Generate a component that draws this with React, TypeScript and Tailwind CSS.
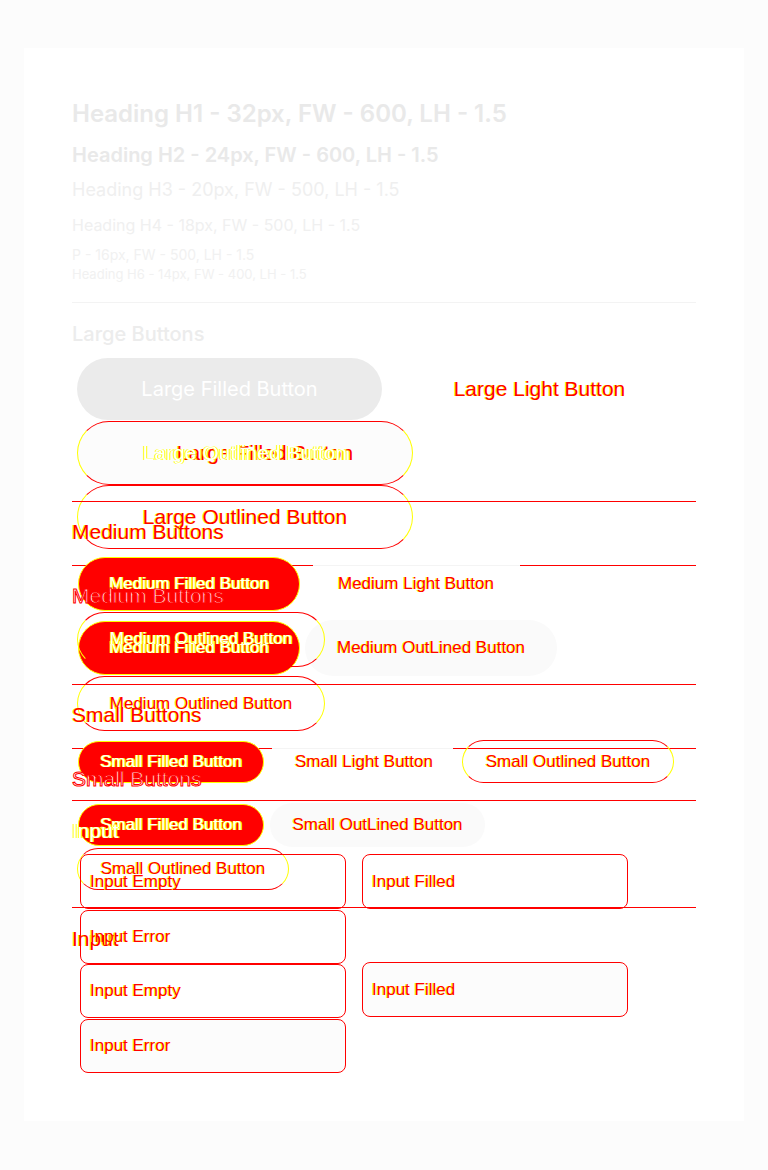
import React from 'react';

const inter = "font-['Inter','Noto_Sans',sans-serif]";
const sans = "font-['Liberation_Sans',Arial,sans-serif]";
const red = "text-[#ff0000] [text-shadow:-1px_0_0_#ffff00]";
const ghost = 'text-white [text-shadow:-1px_0_0_#ffff00,1px_0_0_#ffff00]';
const hollow = 'text-white [-webkit-text-stroke:1px_#ff0000]';

const pillOutline = 'rounded-full border border-[#ffff00] border-y-[#ff0000]';
const pillRed = 'rounded-full border border-[#ffff00] bg-[#ff0000]';
const field = 'flex items-center rounded-lg border border-[#ff0000] pl-[9px]';

const RedLine: React.FC = () => <div className="h-px bg-[#ff0000]" />;

const SplitLine: React.FC<{ a: string; b: string }> = ({ a, b }) => (
  <div className="flex h-px">
    <div className={`${a} bg-[#ff0000]`} />
    <div className={`${b} bg-[#f4f4f4]`} />
    <div className="flex-1 bg-[#ff0000]" />
  </div>
);

// layer that matches the faded parts of the page
const BaseLayer: React.FC = () => (
  <div className="[grid-area:1/1] flex flex-col">
    <h3 className={`mt-4 ${inter} text-[20px] leading-[30px] font-medium text-[#ececec]`}>
      Large Buttons
    </h3>
    <div className="mt-[9px] flex items-center gap-[5px] pl-[5px]">
      <div
        className={`flex h-[62px] w-[305px] items-center justify-center rounded-full bg-[#ebebeb] ${inter} text-[20px] text-white`}
      >
        Large Filled Button
      </div>
      <div className={`flex h-[62px] w-[305px] items-center justify-center ${sans} text-[21px] ${red}`}>
        Large Light Button
      </div>
    </div>
    <div className="mt-px h-[64px]" />
    <div className="pl-[5px]">
      <div className={`flex h-[64px] w-[336px] items-center justify-center ${pillOutline} ${sans} text-[21px] ${red}`}>
        Large Outlined Button
      </div>
    </div>

    <div className="mt-4">
      <SplitLine a="w-[241px]" b="w-[207px]" />
    </div>
    <h3 className={`relative z-10 mt-[15px] ${sans} text-[21px] leading-[30px] ${hollow}`}>Medium Buttons</h3>
    <div className="mt-[9px] flex h-[56px] items-center gap-[5px] pl-[6px]">
      <div className={`flex h-[54px] w-[222px] items-center justify-center ${pillRed} ${sans} text-[17px] ${ghost}`}>
        Medium Filled Button
      </div>
      <div className={`flex h-[56px] w-[252px] items-center justify-center rounded-full bg-[#fafafa] ${sans} text-[17px] ${red}`}>
        Medium OutLined Button
      </div>
    </div>
    <div className="pl-[5px]">
      <div className={`flex h-[55px] w-[248px] items-center justify-center ${pillOutline} ${sans} text-[17px] ${red}`}>
        Medium Outlined Button
      </div>
    </div>

    <div className="mt-[17px]">
      <SplitLine a="w-[200px]" b="w-[181px]" />
    </div>
    <h3 className={`relative z-10 mt-[15px] ${sans} text-[21px] leading-[30px] ${hollow}`}>Small Buttons</h3>
    <div className="mt-[9px] flex h-[44px] items-center gap-[6px] pl-[6px]">
      <div className={`flex h-[42px] w-[186px] items-center justify-center ${pillRed} ${sans} text-[17px] ${ghost}`}>
        Small Filled Button
      </div>
      <div className={`flex h-[44px] w-[215px] items-center justify-center rounded-full bg-[#fafafa] ${sans} text-[17px] ${red}`}>
        Small OutLined Button
      </div>
    </div>
    <div className="mt-px pl-[5px]">
      <div className={`flex h-[42px] w-[212px] items-center justify-center ${pillOutline} ${sans} text-[17px] ${red}`}>
        Small Outlined Button
      </div>
    </div>

    <div className="mt-[17px]">
      <RedLine />
    </div>
    <h3 className={`mt-4 ${sans} text-[21px] leading-[30px] ${red}`}>Input</h3>
    <div className="mt-2 flex items-start gap-4 pl-2">
      <div className={`mt-[2px] h-[54px] w-[266px] ${field} ${sans} text-[17px] ${red}`}>Input Empty</div>
      <div className={`h-[55px] w-[266px] bg-[#fcfcfc] ${field} ${sans} text-[17px] ${red}`}>Input Filled</div>
    </div>
    <div className="mt-px pl-2">
      <div className={`h-[54px] w-[266px] bg-[#fcfcfc] ${field} ${sans} text-[17px] ${red}`}>Input Error</div>
    </div>
  </div>
);

// shifted copy laid over the base layer
const GhostLayer: React.FC = () => (
  <div className="[grid-area:1/1] flex flex-col">
    <div className="h-[118px]" />
    <div className="pl-[5px]">
      <div className={`grid h-[64px] w-[336px] place-items-center bg-[#fcfcfc] ${pillOutline} ${sans} text-[21px]`}>
        <span className={`[grid-area:1/1] ml-[40px] ${red}`}>Large Filled Button</span>
        <span className={`[grid-area:1/1] ${ghost}`}>Large Outlined Button</span>
      </div>
    </div>

    <div className="mt-4">
      <RedLine />
    </div>
    <h3 className={`mt-[15px] ${sans} text-[21px] leading-[30px] ${red}`}>Medium Buttons</h3>
    <div className="mt-[10px] flex h-[54px] items-center pl-[6px]">
      <div className={`flex h-[54px] w-[222px] items-center justify-center ${pillRed} ${sans} text-[17px] ${ghost}`}>
        Medium Filled Button
      </div>
      <span className={`ml-[38px] ${sans} text-[17px] ${red}`}>Medium Light Button</span>
    </div>
    <div className="mt-px pl-[5px]">
      <div className={`flex h-[55px] w-[248px] items-center justify-center pb-[2px] ${pillOutline} ${sans} text-[17px] ${ghost}`}>
        Medium Outlined Button
      </div>
    </div>

    <div className="mt-[17px]">
      <RedLine />
    </div>
    <h3 className={`mt-[15px] ${sans} text-[21px] leading-[30px] ${red}`}>Small Buttons</h3>
    <div className="mt-[10px] flex h-[43px] items-center pl-[6px]">
      <div className={`flex h-[42px] w-[186px] items-center justify-center ${pillRed} ${sans} text-[17px] ${ghost}`}>
        Small Filled Button
      </div>
      <span className={`ml-[31px] ${sans} text-[17px] ${red}`}>Small Light Button</span>
      <div className={`ml-[29px] flex h-[43px] w-[212px] items-center justify-center ${pillOutline} ${sans} text-[17px] ${red}`}>
        Small Outlined Button
      </div>
    </div>

    <div className="mt-[17px]">
      <RedLine />
    </div>
    <h3 className={`mt-[15px] ${sans} text-[21px] leading-[30px] ${ghost}`}>Input</h3>
    <div className="mt-2 flex gap-4 pl-2">
      <div className={`h-[55px] w-[266px] ${field} ${sans} text-[17px] ${red}`}>Input Empty</div>
      <div className={`h-[55px] w-[266px] ${field} ${sans} text-[17px] ${red}`}>Input Filled</div>
    </div>
    <div className="mt-px pl-2">
      <div className={`h-[54px] w-[266px] ${field} ${sans} text-[17px] ${red}`}>Input Error</div>
    </div>
  </div>
);

const App: React.FC = () => {
  return (
    <div className="min-h-[1170px] bg-[#fcfcfc] pt-12 pb-[50px]">
      <div className="mx-6 bg-white px-12 pt-12 pb-12">
        <h1 className={`${inter} text-[24px] leading-[36px] font-semibold text-[#e9e9e9]`}>
          Heading H1 - 32px, FW - 600, LH - 1.5
        </h1>
        <h2 className={`mt-2 ${inter} text-[20px] leading-[30px] font-semibold text-[#e9e9e9]`}>
          Heading H2 - 24px, FW - 600, LH - 1.5
        </h2>
        <h3 className={`mt-[6px] ${inter} text-[18px] leading-[27px] text-[#efefef]`}>
          Heading H3 - 20px, FW - 500, LH - 1.5
        </h3>
        <h4 className={`mt-[10px] ${inter} text-[16px] leading-[24px] text-[#f0f0f0]`}>
          Heading H4 - 18px, FW - 500, LH - 1.5
        </h4>
        <p className={`mt-[7px] ${inter} text-[14px] leading-[21px] text-[#f1f1f1]`}>
          P - 16px, FW - 500, LH - 1.5
        </p>
        <h6 className={`${inter} text-[13px] leading-[19px] text-[#f1f1f1]`}>
          Heading H6 - 14px, FW - 400, LH - 1.5
        </h6>
        <div className="mt-[18px] h-px bg-[#f3f3f3]" />

        <div className="grid">
          <BaseLayer />
          <GhostLayer />
        </div>
      </div>
    </div>
  );
};

export default App;
